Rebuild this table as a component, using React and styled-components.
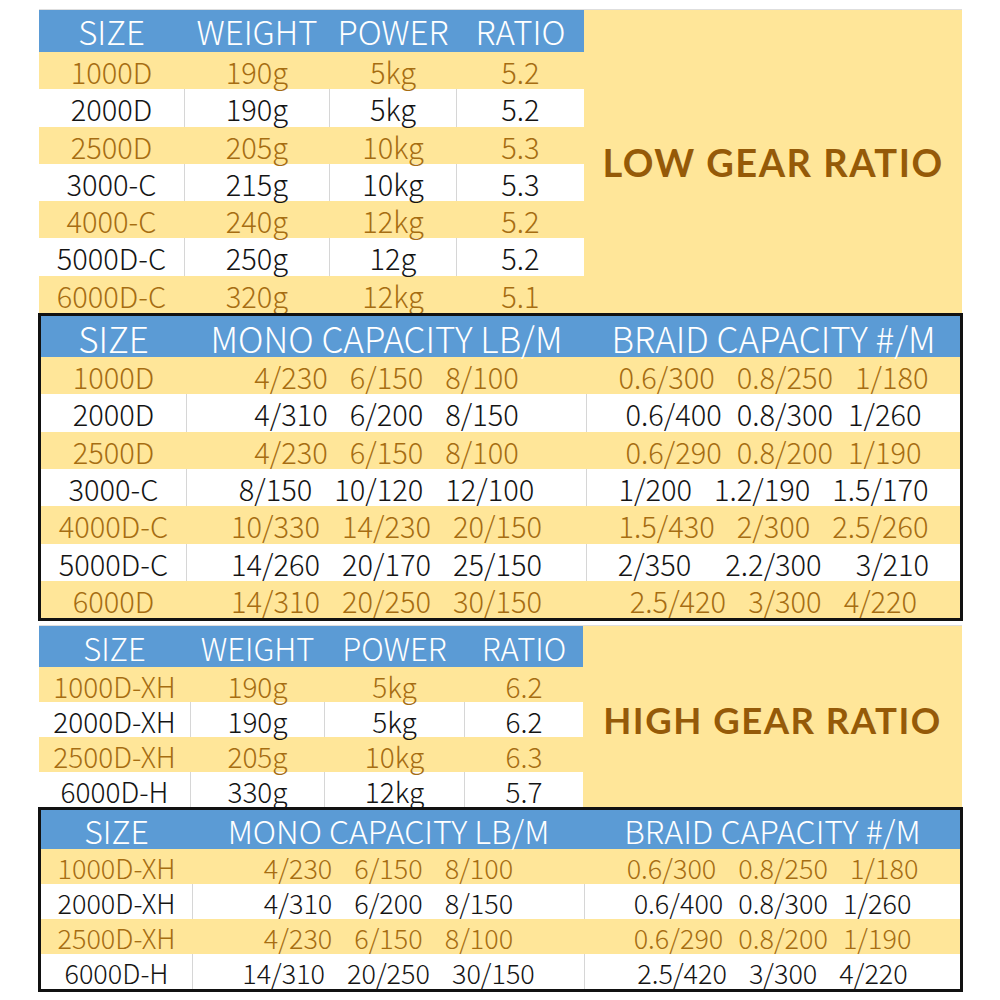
import React from "react";
import styled, { createGlobalStyle } from "styled-components";

const GlobalStyle = createGlobalStyle`
  html, body {
    margin: 0;
    padding: 0;
    background: #ffffff;
  }
  body {
    font-family: "Noto Sans CJK SC", "Liberation Sans", sans-serif;
    font-weight: 300;
  }
`;

const BLUE = "#5b9bd5";
const GOLD = "#ffe699";
const BROWN = "#a66d12";

const lowSpecs = [
  ["1000D", "190g", "5kg", "5.2"],
  ["2000D", "190g", "5kg", "5.2"],
  ["2500D", "205g", "10kg", "5.3"],
  ["3000-C", "215g", "10kg", "5.3"],
  ["4000-C", "240g", "12kg", "5.2"],
  ["5000D-C", "250g", "12g", "5.2"],
  ["6000D-C", "320g", "12kg", "5.1"],
];

const lowCapacity = [
  { size: "1000D", mono: ["4/230", "6/150", "8/100"], braid: ["0.6/300", "0.8/250", "1/180"] },
  { size: "2000D", mono: ["4/310", "6/200", "8/150"], braid: ["0.6/400", "0.8/300", "1/260"], gap: 15 },
  { size: "2500D", mono: ["4/230", "6/150", "8/100"], braid: ["0.6/290", "0.8/200", "1/190"], gap: 15 },
  { size: "3000-C", mono: ["8/150", "10/120", "12/100"], braid: ["1/200", "1.2/190", "1.5/170"] },
  { size: "4000D-C", mono: ["10/330", "14/230", "20/150"], braid: ["1.5/430", "2/300", "2.5/260"] },
  { size: "5000D-C", mono: ["14/260", "20/170", "25/150"], braid: ["2/350", "2.2/300", "3/210"], gap: 34 },
  { size: "6000D", mono: ["14/310", "20/250", "30/150"], braid: ["2.5/420", "3/300", "4/220"] },
];

const highSpecs = [
  ["1000D-XH", "190g", "5kg", "6.2"],
  ["2000D-XH", "190g", "5kg", "6.2"],
  ["2500D-XH", "205g", "10kg", "6.3"],
  ["6000D-H", "330g", "12kg", "5.7"],
];

const highCapacity = [
  { size: "1000D-XH", mono: ["4/230", "6/150", "8/100"], braid: ["0.6/300", "0.8/250", "1/180"] },
  { size: "2000D-XH", mono: ["4/310", "6/200", "8/150"], braid: ["0.6/400", "0.8/300", "1/260"], gap: 15 },
  { size: "2500D-XH", mono: ["4/230", "6/150", "8/100"], braid: ["0.6/290", "0.8/200", "1/190"], gap: 15 },
  { size: "6000D-H", mono: ["14/310", "20/250", "30/150"], braid: ["2.5/420", "3/300", "4/220"] },
];

const Page = styled.div`
  width: 1000px;
  padding: 10px 0 0 39px;
  box-sizing: border-box;
  display: flex;
  flex-direction: column;
`;

const SpecBlock = styled.section`
  display: grid;
  grid-template-columns: ${(p) => p.$tableWidth}px 1fr;
  width: 923px;
  box-shadow: 0 -1px 0 #dedede;
  margin-top: ${(p) => p.$gap || 0}px;
`;

const CapacityBlock = styled.section`
  width: 925px;
  margin-left: -1px;
  border: 3px solid #111111;
  box-sizing: border-box;
`;

const HeadRow = styled.div`
  display: grid;
  grid-template-columns: ${(p) => p.$cols};
  height: ${(p) => p.$h}px;
  background: ${BLUE};
  color: #ffffff;
  font-size: ${(p) => p.$fs}px;
`;

const DataRow = styled.div`
  display: grid;
  grid-template-columns: ${(p) => p.$cols};
  height: ${(p) => p.$h}px;
  background: ${(p) => (p.$gold ? GOLD : "#ffffff")};
  color: ${(p) => (p.$gold ? BROWN : "#141414")};
  font-size: ${(p) => p.$fs}px;
`;

const Cell = styled.div`
  display: flex;
  align-items: center;
  justify-content: center;
  gap: ${(p) => p.$gap || 22}px;
  padding-top: 2px;
  line-height: 1.15;
  white-space: nowrap;
  border-right: 1px solid ${(p) => (p.$lined ? "#d6d6d6" : "transparent")};
  &:last-child {
    border-right: none;
  }
`;

const SidePanel = styled.div`
  background: ${GOLD};
  display: flex;
  align-items: center;
  justify-content: center;
  padding-top: ${(p) => p.$nudge || 0}px;
`;

const Label = styled.div`
  font-family: Lato, "Open Sans", sans-serif;
  font-weight: 700;
  font-size: ${(p) => p.$fs}px;
  letter-spacing: 1.5px;
  color: #955a08;
`;

const specCols = (w) => w.map((n) => `${n}px`).join(" ");

function SpecTable({ rows, cols, headH, rowH, headFs, fs, label, labelFs, nudge, gap }) {
  const template = specCols(cols);
  const tableWidth = cols.reduce((a, b) => a + b, 0);
  return (
    <SpecBlock $tableWidth={tableWidth} $gap={gap}>
      <div>
        <HeadRow $cols={template} $h={headH} $fs={headFs}>
          {["SIZE", "WEIGHT", "POWER", "RATIO"].map((t) => (
            <Cell key={t}>{t}</Cell>
          ))}
        </HeadRow>
        {rows.map((r, i) => (
          <DataRow key={r[0]} $cols={template} $h={rowH} $gold={i % 2 === 0} $fs={fs}>
            {r.map((v, j) => (
              <Cell key={j} $lined={i % 2 === 1}>
                {v}
              </Cell>
            ))}
          </DataRow>
        ))}
      </div>
      <SidePanel $nudge={nudge}>
        <Label $fs={labelFs}>{label}</Label>
      </SidePanel>
    </SpecBlock>
  );
}

function CapacityTable({ rows, cols, headH, rowH, headFs, fs }) {
  return (
    <CapacityBlock>
      <HeadRow $cols={cols} $h={headH} $fs={headFs}>
        <Cell>SIZE</Cell>
        <Cell>MONO CAPACITY LB/M</Cell>
        <Cell>BRAID CAPACITY #/M</Cell>
      </HeadRow>
      {rows.map((r, i) => (
        <DataRow key={r.size} $cols={cols} $h={rowH} $gold={i % 2 === 0} $fs={fs}>
          <Cell $lined={i % 2 === 1}>{r.size}</Cell>
          <Cell $lined={i % 2 === 1}>
            {r.mono.map((m, k) => (
              <span key={k}>{m}</span>
            ))}
          </Cell>
          <Cell $gap={r.gap}>
            {r.braid.map((b, k) => (
              <span key={k}>{b}</span>
            ))}
          </Cell>
        </DataRow>
      ))}
    </CapacityBlock>
  );
}

export default function App() {
  return (
    <>
      <GlobalStyle />
      <Page>
        <SpecTable
          rows={lowSpecs}
          cols={[146, 145, 127, 127]}
          headH={42}
          rowH={37.3}
          headFs={33}
          fs={29}
          label="LOW GEAR RATIO"
          labelFs={38}
        />
        <CapacityTable
          rows={lowCapacity}
          cols="146px 400px 1fr"
          headH={41}
          rowH={37.3}
          headFs={35}
          fs={29}
        />
        <SpecTable
          rows={highSpecs}
          cols={[152, 134, 140, 118]}
          headH={41}
          rowH={35}
          headFs={31}
          fs={28}
          label="HIGH GEAR RATIO"
          labelFs={36.5}
          nudge={6}
          gap={5}
        />
        <CapacityTable
          rows={highCapacity}
          cols="152px 392px 1fr"
          headH={39}
          rowH={35}
          headFs={32}
          fs={27}
        />
      </Page>
    </>
  );
}
